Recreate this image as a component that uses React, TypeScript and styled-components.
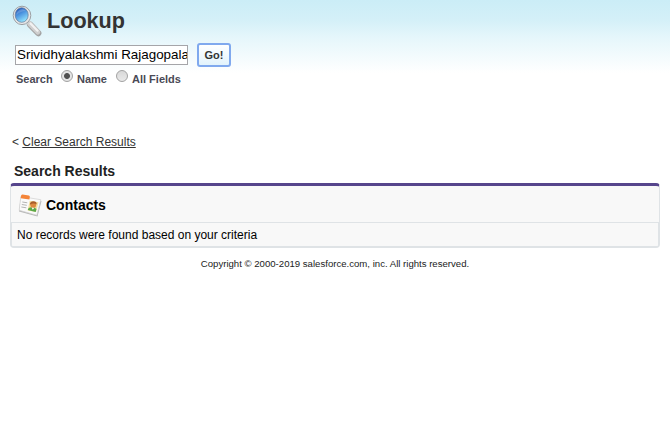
import React from 'react';
import styled, { createGlobalStyle } from 'styled-components';

const GlobalStyle = createGlobalStyle`
  * { box-sizing: border-box; }
  body {
    margin: 0;
    background: #fff;
    color: #222;
    font-family: "Liberation Sans", Arial, Helvetica, sans-serif;
    font-size: 12px;
  }
`;

const Page = styled.div`
  display: flex;
  flex-direction: column;
  min-height: 439px;
  overflow: hidden;
  background: linear-gradient(#cbedf7 0px, #d4f0f8 20px, #e5f6fb 37px, #fff 73px);
`;

const Header = styled.header`
  display: flex;
  height: 43px;
  padding: 4px 0 0 11px;
`;

const Title = styled.h1`
  margin: 4px 0 0 4px;
  font-size: 21.6px;
  line-height: 25px;
  color: #333;
`;

const SearchForm = styled.form`
  display: flex;
  align-items: center;
  gap: 9px;
  height: 24px;
  padding-left: 15px;
`;

const SearchInput = styled.input`
  width: 173px;
  height: 20px;
  padding: 0 0 2px 1px;
  border: 1px solid #a5a5a9;
  background: #fff;
  color: #000;
  font: 13.4px/16px "Liberation Sans", Arial, sans-serif;
  outline: none;
`;

const GoButton = styled.button`
  width: 34px;
  height: 24px;
  padding: 0;
  border: 2px solid #80a9ee;
  border-radius: 3px;
  background: linear-gradient(#fff, #e2f3fc);
  color: #333;
  font: bold 11px/18px "Liberation Sans", Arial, sans-serif;
`;

const Options = styled.div`
  display: flex;
  height: 24px;
  padding: 3px 0 0 16px;
  color: #4a4a56;
  font-size: 11px;
  font-weight: bold;
  line-height: 19px;
`;

const OptionsLabel = styled.span`
  width: 45px;
`;

const Option = styled.label<{ $width: number }>`
  display: flex;
  gap: 4px;
  width: ${({ $width }) => $width}px;
  white-space: nowrap;
`;

const Radio = styled.span<{ $checked?: boolean }>`
  flex: none;
  width: 12px;
  height: 12px;
  border: 1px solid #a2a2a2;
  border-radius: 50%;
  background: ${({ $checked }) =>
    $checked
      ? 'radial-gradient(circle, #505050 0 2.5px, #e4e4e4 3.4px)'
      : 'linear-gradient(#d8d8d8, #e9e9e9)'};
`;

const ClearRow = styled.div`
  margin-top: 44px;
  padding-left: 12px;
  line-height: 14px;
  color: #333;
`;

const ClearLink = styled.a`
  color: #333;
  text-decoration: underline;
`;

const ResultsTitle = styled.h2`
  margin: 15px 0 4px 14px;
  font-size: 14px;
  line-height: 15px;
  color: #222;
`;

const Panel = styled.section`
  margin: 0 10px;
  height: 65px;
  border: 1px solid #dfe3e6;
  border-top: 3px solid #56458c;
  border-bottom: 2px solid #dfe3e6;
  border-radius: 4px;
  background: #f8f8f8;
  color: #000;
`;

const PanelHeader = styled.div`
  display: flex;
  align-items: center;
  gap: 3px;
  height: 37px;
  padding: 2px 0 0 7px;
  border-bottom: 1px solid #dfe3e6;
`;

const PanelTitle = styled.h3`
  margin: 0;
  font-size: 14px;
  line-height: 18px;
`;

const PanelBody = styled.div`
  height: 23px;
  padding-left: 5px;
  border: solid #dfe3e6;
  border-width: 0 1px;
  line-height: 24px;
`;

const Footer = styled.footer`
  margin-top: 10px;
  text-align: center;
  font-size: 9.6px;
  line-height: 12px;
  color: #222;
`;

const MagnifierIcon = () => (
  <svg width="32" height="34" viewBox="0 0 32 34" aria-hidden="true">
    <defs>
      <linearGradient id="lens" x1=".2" y1="0" x2=".7" y2="1">
        <stop offset="0" stopColor="#1c4fb4" />
        <stop offset=".45" stopColor="#4f98e2" />
        <stop offset="1" stopColor="#9aecff" />
      </linearGradient>
    </defs>
    <path d="M19 20.5l8.3 8.7" stroke="#a3a3a3" strokeWidth="6.2" strokeLinecap="round" />
    <path d="M18.5 19.5l8.3 8.7" stroke="#cfcfcf" strokeWidth="4.8" strokeLinecap="round" />
    <path d="M19.5 19.5l7 7.2" stroke="#f2f2f2" strokeWidth="2.2" strokeLinecap="round" />
    <ellipse cx="11" cy="11.4" rx="8.8" ry="9.2" fill="#e6e7e8" stroke="#9c9fa3" strokeWidth="1" />
    <ellipse cx="10.7" cy="11" rx="6.5" ry="7.3" fill="url(#lens)" stroke="#62799a" strokeWidth=".7" />
    <path d="M5.5 9c2-4 7-5 9-2-3 0-6 1-9 4z" fill="#fff" opacity=".18" />
  </svg>
);

const ContactsIcon = () => (
  <svg width="25" height="26" viewBox="0 0 25 26" aria-hidden="true">
    <path d="M2.5 7l21 2-4 15.5L1 19.5z" fill="#999" opacity=".7" />
    <path d="M2.8 4.5l20 3.2-4 15.5L1.2 18.3z" fill="#fafafa" stroke="#d0d0d0" strokeWidth=".7" />
    <path d="M3 4q.2-1.7 1.5-1.5l6.3.9q1.2.2 1 1.5l-.4 2.6-8.7-1.3z" fill="#f48438" />
    <path d="M4.3 10l5 .8M3.8 12.5l5 .8M3.3 15l5 .8" stroke="#b4b4b4" strokeWidth="1" />
    <path d="M11.7 8.8l8.8 1.5-2.5 9.8-8.4-1.7z" fill="#f3df9f" />
    <path d="M9.8 18q.6-3.3 4.3-2.8t4.4 1.8l-.8 3z" fill="#59a849" />
    <circle cx="15.2" cy="12.9" r="2.9" fill="#dc883f" />
    <path d="M11.9 12.8q-.1-3.6 3.4-3.6t3.4 3.2q-3-2-6.8.4z" fill="#a95d2c" />
    <path d="M13.6 15.6l1.2 2.2 1.4-1.9z" fill="#fff" />
  </svg>
);

export default function App() {
  return (
    <>
      <GlobalStyle />
      <Page>
        <Header>
          <MagnifierIcon />
          <Title>Lookup</Title>
        </Header>
        <SearchForm onSubmit={(event) => event.preventDefault()}>
          <SearchInput defaultValue="Srividhyalakshmi Rajagopalan" aria-label="Search" />
          <GoButton>Go!</GoButton>
        </SearchForm>
        <Options>
          <OptionsLabel>Search</OptionsLabel>
          <Option $width={55}>
            <Radio $checked />
            Name
          </Option>
          <Option $width={80}>
            <Radio />
            All Fields
          </Option>
        </Options>
        <ClearRow>
          &lt; <ClearLink>Clear Search Results</ClearLink>
        </ClearRow>
        <ResultsTitle>Search Results</ResultsTitle>
        <Panel>
          <PanelHeader>
            <ContactsIcon />
            <PanelTitle>Contacts</PanelTitle>
          </PanelHeader>
          <PanelBody>No records were found based on your criteria</PanelBody>
        </Panel>
        <Footer>Copyright © 2000-2019 salesforce.com, inc. All rights reserved.</Footer>
      </Page>
    </>
  );
}
